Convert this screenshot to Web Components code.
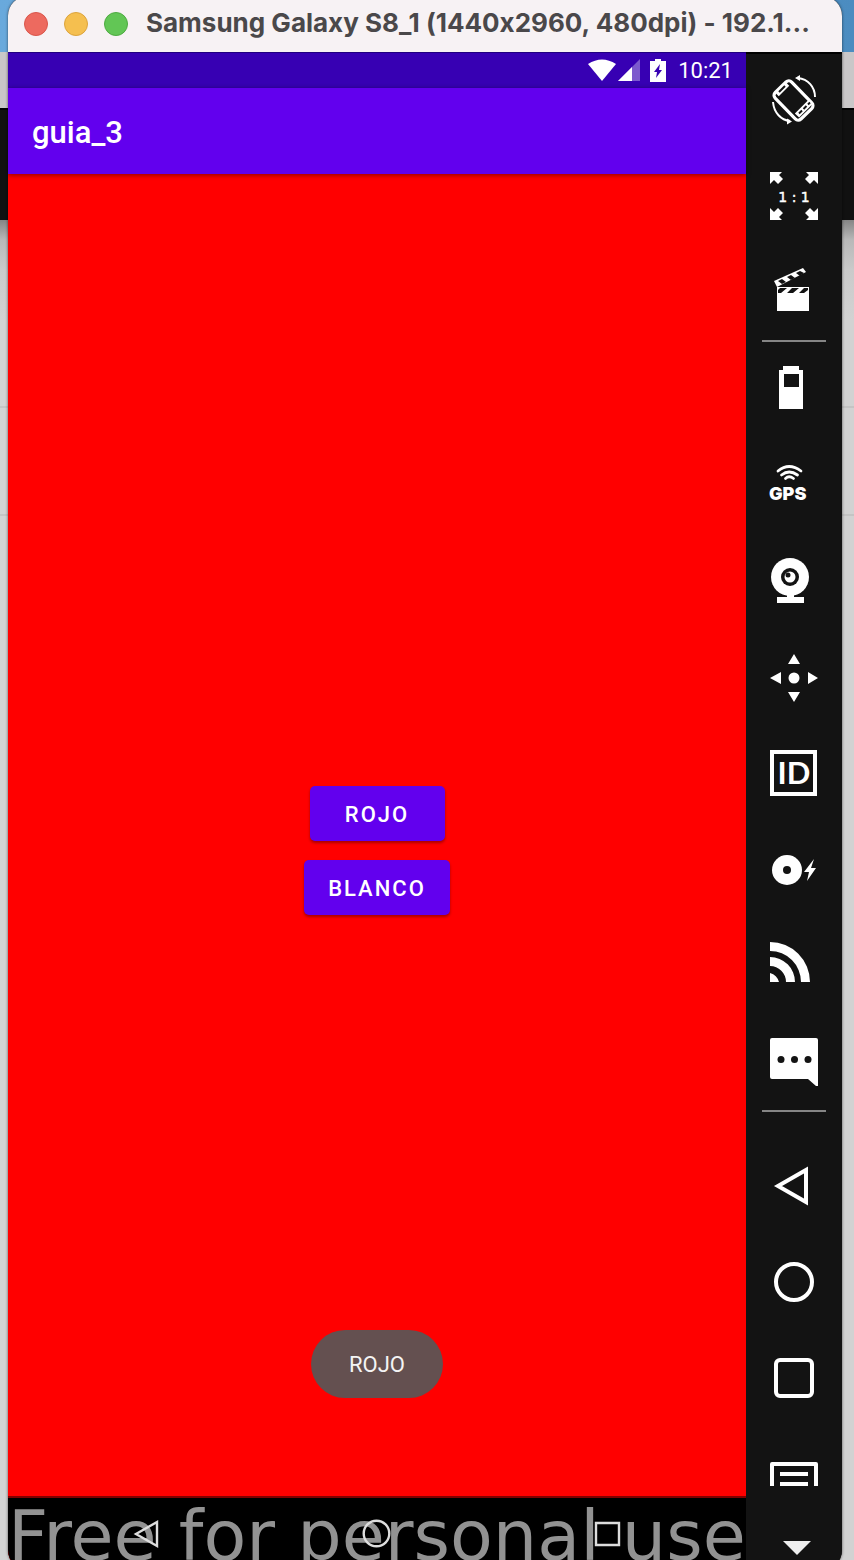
<!DOCTYPE html>
<html lang="es">
<head>
<meta charset="utf-8">
<meta name="viewport" content="width=device-width, initial-scale=1">
<title>guia_3</title>
<style>
html,body{margin:0;height:100%}
body{font-family:Roboto,"Liberation Sans",sans-serif}
</style>
</head>
<body>
<emulator-desktop>
  <emulator-window>
    <window-titlebar slot="title">Samsung Galaxy S8_1 (1440x2960, 480dpi) - 192.1...</window-titlebar>
    <device-screen slot="screen">
      <status-bar slot="top">10:21</status-bar>
      <app-bar slot="top">guia_3</app-bar>
      <material-button>ROJO</material-button>
      <material-button>BLANCO</material-button>
      <toast-message slot="toast">ROJO</toast-message>
      <nav-bar slot="nav">Free for personal use</nav-bar>
    </device-screen>
    <tool-strip slot="tools"></tool-strip>
  </emulator-window>
</emulator-desktop>
<script>
function define(name, html) {
  const t = document.createElement('template');
  t.innerHTML = html;
  customElements.define(name, class extends HTMLElement {
    constructor() {
      super();
      this.attachShadow({mode: 'open'}).append(t.content.cloneNode(true));
    }
  });
}

define('emulator-desktop', `<style>
:host{display:flex;height:100vh;overflow:hidden;background:
 linear-gradient(90deg,#69a9dc,#4b8cc0) 0 0/100% 52px no-repeat,
 linear-gradient(#c9c7c8,#c9c7c8) 0 52px/100% 56px no-repeat,
 linear-gradient(#000 2px,#111 2px) 0 108px/100% 112px no-repeat,
 linear-gradient(#c4c4c4,#c4c4c4) 0 406px/100% 2px no-repeat,
 linear-gradient(#c4c4c4,#c4c4c4) 0 514px/100% 2px no-repeat,
 linear-gradient(#858585 220px,#b8b8b8 240px,#cacaca 270px,#d2d2d2 320px)}
</style><slot></slot>`);

define('emulator-window', `<style>
:host{flex:1;display:flex;flex-direction:column;margin:-4px 12px -10px 8px;border-radius:20px;overflow:hidden;background:#131313;box-shadow:0 0 3px #0009}
.row{flex:1;display:flex;min-height:0}
</style><slot name="title"></slot><div class="row"><slot name="screen"></slot><slot name="tools"></slot></div>`);

define('window-titlebar', `<style>
:host{display:flex;align-items:center;gap:18px;height:52px;padding:4px 16px 0;background:#f7f2f4;color:#4a484a;font:700 26px/36px Inter,sans-serif;font-feature-settings:"calt" 0;white-space:nowrap}
.lights{display:flex;gap:16px;flex:none;margin-bottom:4px}
button{width:24px;height:24px;padding:0;border:1px solid #d9564b;border-radius:50%;background:#ed6a5f}
button:nth-child(2){background:#f5bf4f;border-color:#dba33c}
button:nth-child(3){background:#62c655;border-color:#4eaa41}
h1{margin:0 0 6px;font:inherit;font-feature-settings:inherit}
</style><div class="lights"><button aria-label="Close"></button><button aria-label="Minimize"></button><button aria-label="Zoom"></button></div><h1><slot></slot></h1>`);

define('device-screen', `<style>
:host{flex:1;min-width:0;display:flex;flex-direction:column;position:relative;background:#f00}
main{flex:1;display:flex;flex-direction:column;align-items:center;justify-content:center;gap:19px;padding-top:31px;border-bottom:2px solid #800000}
slot[name=toast]{display:flex;justify-content:center;position:absolute;left:0;right:0;bottom:172px}
</style><slot name="top"></slot><main><slot></slot></main><slot name="toast"></slot><slot name="nav"></slot>`);

define('status-bar', `<style>
:host{display:flex;align-items:center;justify-content:flex-end;height:36px;box-sizing:border-box;padding-right:13px;background:#3700b3;border-top:1px solid #200080;color:#fff;font-size:22px;line-height:24px}
svg{width:84px;height:24px;margin-right:6px}
</style><svg viewBox="0 0 84 24" fill="#fff" aria-hidden="true">
<path d="M0 5Q14-4 28 5L14 22Z"/>
<path opacity=".35" d="M52 0V22H30Z"/><path d="M44 8V22H30Z"/>
<path d="M67 0h6v2h5V23H62V2h5Z"/><path fill="#3700b3" d="M72 5l-6 8h3l-1 6 6-8h-3Z"/></svg><time><slot></slot></time>`);

define('app-bar', `<style>
:host{display:flex;align-items:center;height:86px;padding:4px 24px 0;box-sizing:border-box;background:#6200ee;color:#fff;position:relative;box-shadow:0 1px 5px #0007}
h2{margin:0;font-size:31px;line-height:36px;font-weight:500}
</style><h2><slot></slot></h2>`);

define('material-button', `<style>
:host{display:block}
button{display:block;min-width:135px;height:55px;padding:2px 24px 0;border:0;border-radius:5px;background:#6200ee;color:#fff;font:500 22px/24px Roboto,sans-serif;letter-spacing:2px;box-shadow:0 2px 3px #0005}
</style><button type="button"><slot></slot></button>`);

define('toast-message', `<style>
:host{display:block;padding:21px 38px 19px;border-radius:34px;background:#645050;color:#f4f4f4;font-size:22px;line-height:28px}
</style><div role="status"><slot></slot></div>`);

define('nav-bar', `<style>
:host{display:block;height:72px;position:relative;background:#000;overflow:hidden}
nav{display:flex;justify-content:space-between;padding:23px 125px;position:relative}
button{padding:0;border:0;background:none;width:26px;height:26px}
svg{display:block;width:26px;height:26px;fill:none;stroke:#ddd;stroke-width:2.4;overflow:visible}
p{position:absolute;left:0;top:0;margin:0;color:#929292;font:70px/76px "DejaVu Sans",sans-serif;white-space:nowrap}
</style><p><slot></slot></p><nav aria-label="Android">
<button aria-label="Back"><svg viewBox="0 0 26 26"><path d="M24 1V25L3 13Z"/></svg></button>
<button aria-label="Home"><svg viewBox="0 0 26 26"><circle cx="12.500" cy="12.500" r="12.800"/></svg></button>
<button aria-label="Recent apps"><svg viewBox="0 0 26 26"><path d="M1 2H24V24H1Z"/></svg></button></nav>`);

define('tool-button', `<style>
:host{display:block;height:96px;flex:none}
button{display:block;width:100%;height:100%;padding:24px;border:0;background:none}
</style><button type="button"><slot></slot></button>`);

const tools = [
 ['Rotate', `<g fill="none" stroke="#fff"><rect x="12" y="6" width="23" height="37" rx="4" transform="rotate(-44 23.5 24.5)" stroke-width="3.200"/><path stroke-width="2" d="M28 2C38 3 45 11 45 21M3 26C4 37 11 44 20 45"/><path stroke-width="6" d="M27 39.500 40.500 26"/><path stroke-width="5" d="M7 18.500 17.500 8"/></g><path fill="#fff" d="M25 2l5-3v6ZM22 45.500l-5-3v6Z"/><path stroke="#131313" stroke-width="2" d="M29 37.500l3-3M33.500 33l3-3M38 28.500l2-2M9 16l6-6"/>`],
 ['Pixel perfect', `<path d="M0 0h12L9 3l4 4-5 5-4-4-4 4ZM48 0v12l-4-4-4 4-5-5 4-4-3-3ZM0 48V36l4 4 4-4 5 5-4 4 3 3ZM48 48H36l3-3-4-4 5-5 4 4 4-4Z"/><text x="24" y="30" text-anchor="middle" font-family="DejaVu Sans" font-size="14" font-weight="400" stroke="#fff" stroke-width=".4">1 : 1</text>`],
 ['Screencast', `<path d="M7 19H39V43H7Z"/><path d="M4 13 33 0 36 4 7 19Z"/><path fill="#131313" d="M10 20h7l-6 5H8v-3ZM22 20h7l-6 5h-6ZM34 20h4v2l-4 3h-5ZM8 13l4-2 4 3-4 2ZM17 9l4-2 4 3-4 2ZM26 5l4-2 4 2-4 3Z"/>`],
 ['Battery', `<path d="M13 0H29V4H33V43H9V4H13Z"/><path fill="#131313" d="M14 8H29V21H14Z"/>`],
 ['GPS', `<g fill="none" stroke="#fff" stroke-width="2.800" stroke-linecap="round"><path d="M8 9Q19-0 31 9M11.500 13Q19 7 27.500 13M15.500 16.500Q19 13 23.500 16.500"/></g><text x="-1" y="38" font-family="Inter" font-size="18" font-weight="900">GPS</text>`],
 ['Camera', `<circle cx="20" cy="19" r="19"/><path d="M17 36h7v3h10v6H7v-6h10Z"/><circle cx="20" cy="19" r="9" fill="#131313"/><circle cx="20" cy="19" r="5.500"/><circle cx="18" cy="17" r="2.500" fill="#131313"/>`],
 ['Multi-touch', `<circle cx="24" cy="24" r="5.500"/><path d="M24 0l6 10H18ZM24 48l6-10H18ZM0 24l11-6v12ZM48 24l-10-6v12Z"/>`],
 ['Identifiers', `<path fill="none" stroke="#fff" stroke-width="4" d="M2 2H45V44H2Z"/><text x="24" y="34" text-anchor="middle" font-family="Lato" font-size="31" font-weight="700">ID</text>`],
 ['Disk I/O', `<circle cx="17" cy="24" r="15"/><circle cx="17" cy="24" r="4" fill="#131313"/><path d="M44 13 34 26h5l-2 9 9-13h-5Z"/>`],
 ['Network', `<path d="M0 0A40 40 0 0 1 40 40H31A31 31 0 0 0 0 9ZM0 15A25 25 0 0 1 25 40H16A16 16 0 0 0 0 24ZM0 31Q7 33 9 40H0Z"/>`],
 ['Phone', `<path d="M2 0H46Q48 0 48 2V48H46L38 41H2Q0 41 0 39V2Q0 0 2 0Z"/><g fill="#131313"><circle cx="11" cy="21.500" r="3.500"/><circle cx="24.500" cy="21.500" r="3.500"/><circle cx="38" cy="21.500" r="3.500"/></g>`],
 ['Back', `<path fill="none" stroke="#fff" stroke-width="4" d="M36 8V40L8 24Z"/>`],
 ['Home', `<circle cx="24" cy="24" r="18" fill="none" stroke="#fff" stroke-width="4"/>`],
 ['Recent apps', `<rect x="6" y="6" width="36" height="36" rx="4" fill="none" stroke="#fff" stroke-width="4"/>`],
 ['Menu', `<path d="M2 12H46Q48 12 48 14V36H44V16H4V36H0V14Q0 12 2 12ZM10 22H38V26H10ZM10 32H38V36H10Z"/>`]
];
const button = ([label, art]) => `<tool-button><svg role="img" aria-label="${label}" viewBox="0 0 48 48">${art}</svg></tool-button>`;
define('tool-strip', `<style>
:host{flex:none;width:96px;display:flex;flex-direction:column;background:#131313;box-shadow:inset 0 2px #000}
.group{display:flex;flex-direction:column}
svg{display:block;width:48px;height:48px;fill:#fff;overflow:visible}
hr{width:64px;height:2px;margin:0 16px;border:0;background:#858585;flex:none}
.keys{margin-top:26px;height:348px}
.more{padding:0;border:0;background:none;height:74px}
.more svg{width:96px;height:74px}
</style><div class="group">${tools.slice(0,3).map(button).join('')}</div><hr>
<div class="group">${tools.slice(3,11).map(button).join('')}</div><hr>
<div class="group keys">${tools.slice(11).map(button).join('')}</div>
<button class="more" aria-label="More"><svg viewBox="0 0 96 74"><path fill="#eee" d="M37 55H65L51 69Z"/></svg></button>`);
</script>
</body>
</html>
